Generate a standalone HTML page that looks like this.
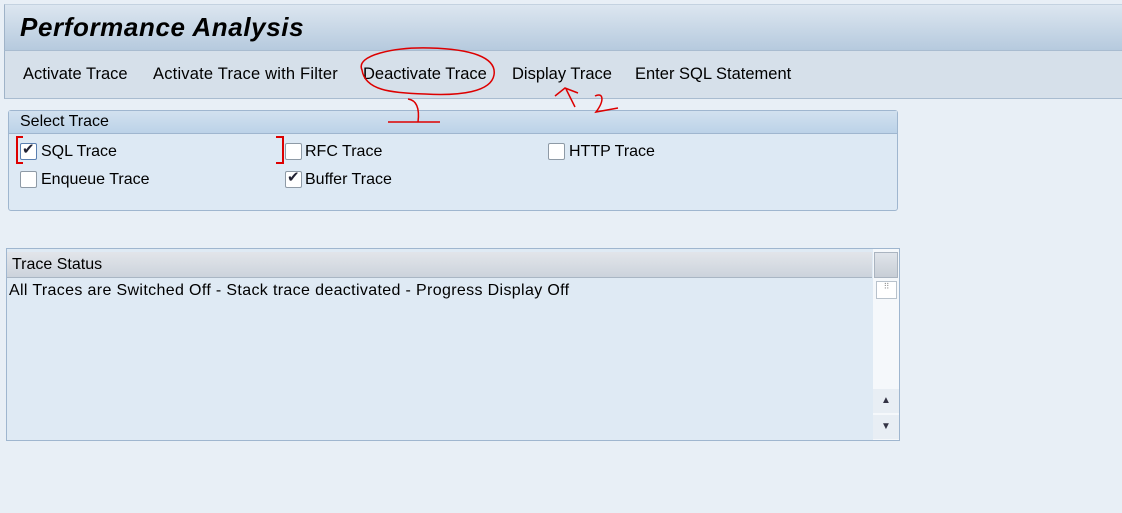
<!DOCTYPE html>
<html><head><meta charset="utf-8"><style>
*{margin:0;padding:0;box-sizing:border-box}
body{width:1122px;height:513px;background:#e8eff6;font-family:"Liberation Sans",sans-serif;color:#000;position:relative;overflow:hidden}
.a{position:absolute;white-space:nowrap}
.title{left:4px;top:4px;width:1118px;height:46px;background:linear-gradient(#dce6f0,#b6cade);border-top:1px solid #c4d2e0;border-left:1px solid #9fb3c8}
.title span{position:absolute;left:15px;top:7px;font-size:26px;font-weight:bold;font-style:italic;letter-spacing:0.6px}
.tb{left:4px;top:50px;width:1118px;height:49px;background:#d6e0ea;border-top:1px solid #a9bcd0;border-bottom:1px solid #a9bcd0;border-left:1px solid #9fb3c8}
.tb span{position:absolute;top:14px;font-size:16.5px}
.grp{left:8px;top:110px;width:890px;height:101px;border:1px solid #9fb6cf;border-radius:3px;background:#dde9f4}
.grp .h{height:23px;background:linear-gradient(#d2e1ef,#bcd2e8);border-bottom:1px solid #9fb6cf;font-size:16px;padding:2px 0 0 11px}
.cb{width:17px;height:17px;border:1px solid #8e9aa6;border-radius:2px;background:#fff}
.cbl{font-size:16px}
.tbl{left:6px;top:248px;width:894px;height:193px;border:1px solid #9fb6cf;background:#dfeaf4}
.th{left:0;top:3px;width:865px;height:26px;background:linear-gradient(#e2e5ea,#ccd3dc);border-bottom:1px solid #a9b6c4;font-size:16px;padding:4px 0 0 5px}
.sb{left:866px;top:0;width:26px;height:191px;background:#f5f8fb}
</style></head><body>
<div class="a title"><span>Performance Analysis</span></div>
<div class="a tb">
<span style="left:18px">Activate Trace</span>
<span style="left:148px;letter-spacing:0.2px">Activate Trace with Filter</span>
<span style="left:358px">Deactivate Trace</span>
<span style="left:507px">Display Trace</span>
<span style="left:630px">Enter SQL Statement</span>
</div>
<div class="a grp"><div class="h">Select Trace</div></div>
<div class="a cb" style="left:20px;top:143px;border-color:#5a7fb0"></div><div class="a" style="left:22px;top:140px;font-size:15px;color:#223">✔</div>
<div class="a cbl" style="left:41px;top:143px">SQL Trace</div>
<div class="a cb" style="left:285px;top:143px"></div><div class="a cbl" style="left:305px;top:143px">RFC Trace</div>
<div class="a cb" style="left:548px;top:143px"></div><div class="a cbl" style="left:569px;top:143px">HTTP Trace</div>
<div class="a cb" style="left:20px;top:171px"></div><div class="a cbl" style="left:41px;top:171px">Enqueue Trace</div>
<div class="a cb" style="left:285px;top:171px"></div><div class="a" style="left:287px;top:168px;font-size:15px;color:#223">✔</div><div class="a cbl" style="left:305px;top:171px">Buffer Trace</div>
<svg class="a" style="left:0;top:0" width="1122" height="513">
<g fill="none" stroke="#d00" stroke-width="2">
<path d="M23 137H17V163H23M276 137H283V163H276"/>
<path d="M362 70C355 55 395 47 430 48C470 49 497 57 494 75C491 92 460 96 425 94C390 93 365 90 362 70Z" stroke-width="1.5"/>
<path d="M408 99C415 100 420 106 418 122M388 122H440" stroke-width="1.5"/>
<path d="M555 96L565 88L578 93M566 89L575 107" stroke-width="1.5"/>
<path d="M595 96C603 92 605 100 596 112L618 108" stroke-width="1.5"/>
</g></svg>
<div class="a tbl">
<div class="a th">Trace Status</div>
<div class="a" style="left:2px;top:33px;font-size:16px;letter-spacing:0.35px">All Traces are Switched Off - Stack trace deactivated - Progress Display Off</div>
<div class="a sb">
<div class="a" style="left:1px;top:3px;width:24px;height:26px;background:linear-gradient(#e0e4ea,#c8ced6);border:1px solid #aab4c0"></div>
<div class="a" style="left:3px;top:32px;width:21px;height:18px;background:#fff;border:1px solid #b8c2cc;font-size:8px;color:#999;text-align:center">⠿</div>
<div class="a" style="left:0;top:140px;width:26px;height:24px;background:#e8eef4;font-size:10px;text-align:center;padding-top:6px;color:#334">▲</div>
<div class="a" style="left:0;top:166px;width:26px;height:24px;background:#e8eef4;font-size:10px;text-align:center;padding-top:6px;color:#334">▼</div>
</div>
</div>
</body></html>
